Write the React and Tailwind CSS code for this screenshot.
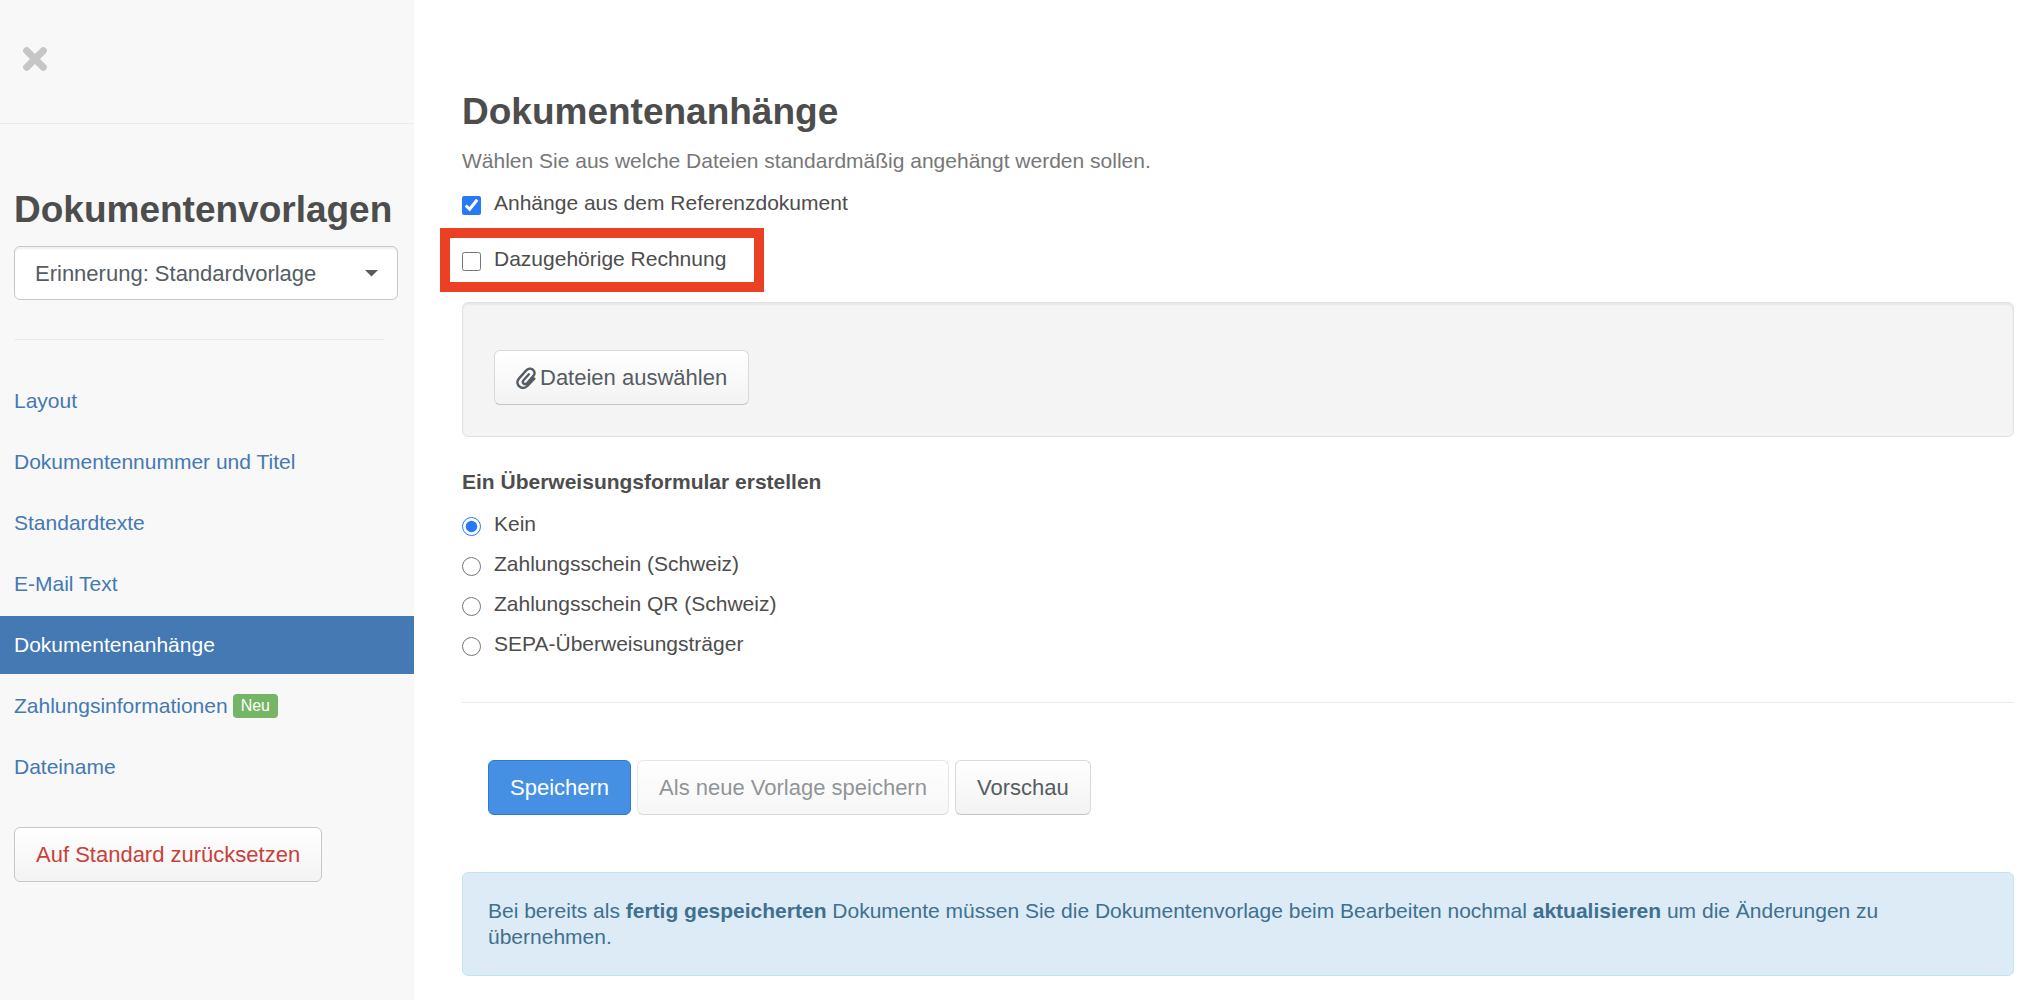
import React, { useState } from "react";

const navItems = [
  { label: "Layout" },
  { label: "Dokumentennummer und Titel" },
  { label: "Standardtexte" },
  { label: "E-Mail Text" },
  { label: "Dokumentenanhänge", active: true },
  { label: "Zahlungsinformationen", badge: "Neu" },
  { label: "Dateiname" },
];

const transferForms = [
  "Kein",
  "Zahlungsschein (Schweiz)",
  "Zahlungsschein QR (Schweiz)",
  "SEPA-Überweisungsträger",
];

const buttonBase =
  "inline-flex items-center justify-center h-[55px] px-[21px] rounded-md border text-[22px] whitespace-nowrap";
const buttonDefault =
  "bg-linear-to-b from-white to-[#f3f3f3] border-[#d9d9d9] border-b-[#c4c4c4] text-[#555c63]";

function PaperclipIcon() {
  return (
    <svg
      className="mr-1"
      width="20"
      height="22"
      viewBox="0 0 20 22"
      fill="none"
      stroke="currentColor"
      strokeWidth="2.4"
      strokeLinecap="round"
      strokeLinejoin="round"
    >
      <path d="M18.3 11.6l-6.7 7.2c-2.4 2.5-5.6 2.7-7.8 1-2.9-2.3-3.2-5.6-.9-8.2L10 3.6c2-2.2 4.9-2.5 6.9-.9 2.1 1.7 2.2 4.3.5 6.2L11.2 16c-1.1 1.2-2.6 1.3-3.6.5-1-.9-1-2.2-.1-3.2l5.4-6" />
    </svg>
  );
}

function Sidebar() {
  return (
    <aside className="w-[414px] shrink-0 bg-[#f8f8f8]">
      <div className="h-[124px] border-b border-[#ececec] pt-[47px] pl-[23px]">
        <button type="button" aria-label="Close" className="block">
          <svg width="24" height="24" viewBox="0 0 24 24" fill="none">
            <path
              d="M3.7 3.7l16.6 16.6M20.3 3.7L3.7 20.3"
              stroke="#c6c6c6"
              strokeWidth="7"
              strokeLinecap="round"
            />
          </svg>
        </button>
      </div>

      <div className="pt-16 px-[14px]">
        <h2 className="text-[37px] leading-[44px] font-bold text-[#4d4d4d]">
          Dokumentenvorlagen
        </h2>
        <div className="relative mt-[14px] w-[384px]">
          <select
            aria-label="Dokumentenvorlage"
            className="block w-full h-[54px] pl-5 appearance-none rounded-md border border-[#c8c8c8] bg-white text-[22px] text-[#555c63] shadow-[inset_0_2px_2px_rgba(0,0,0,0.06)]"
          >
            <option>Erinnerung: Standardvorlage</option>
          </select>
          <svg
            className="absolute right-5 top-6 pointer-events-none"
            width="13"
            height="7"
            viewBox="0 0 13 7"
          >
            <path d="M0 0h13L6.5 6.5z" fill="#555c63" />
          </svg>
        </div>
        <hr className="mt-[39px] mr-4 border-[#ececec]" />
      </div>

      <nav className="mt-8 flex flex-col gap-[3px]">
        {navItems.map((item) => (
          <a
            key={item.label}
            href="#"
            className={`flex items-center h-[58px] px-[14px] text-[21px] ${
              item.active ? "bg-[#4479b3] text-white" : "text-[#4479b3]"
            }`}
          >
            {item.label}
            {item.badge && (
              <span className="ml-[5px] h-6 px-2 rounded-sm bg-[#74b566] text-base leading-6 text-white">
                {item.badge}
              </span>
            )}
          </a>
        ))}
      </nav>

      <div className="mt-[31px] px-[14px]">
        <button
          type="button"
          className={`${buttonBase} bg-linear-to-b from-white to-[#f3f3f3] border-[#c8c8c8] text-[#c9403b]`}
        >
          Auf Standard zurücksetzen
        </button>
      </div>
    </aside>
  );
}

function AttachmentOptions() {
  const [fromReference, setFromReference] = useState(true);
  const [invoice, setInvoice] = useState(false);

  return (
    <>
      <label className="mt-[14px] flex w-fit gap-[13px] text-[21px] leading-7">
        <input
          type="checkbox"
          className="mt-[7px] size-[19px] accent-[#2878f8]"
          checked={fromReference}
          onChange={(e) => setFromReference(e.target.checked)}
        />
        Anhänge aus dem Referenzdokument
      </label>
      <div className="relative mt-7 w-fit">
        <label className="flex gap-[13px] text-[21px] leading-7">
          <input
            type="checkbox"
            className="mt-[7px] size-[19px] accent-[#2878f8]"
            checked={invoice}
            onChange={(e) => setInvoice(e.target.checked)}
          />
          Dazugehörige Rechnung
        </label>
        {/* Highlight frame */}
        <div className="absolute -left-[22px] -top-[17px] w-[324px] h-16 border-[10px] border-[#ec4025] pointer-events-none"></div>
      </div>
    </>
  );
}

function App() {
  const [form, setForm] = useState("Kein");

  return (
    <div
      className="flex min-h-screen bg-white text-[#4d4d4d]"
      style={{ fontFamily: '"Liberation Sans", Arial, sans-serif' }}
    >
      <Sidebar />

      <main className="grow min-w-0 pl-12 pr-[18px] pt-[90px]">
        <h1 className="text-[37px] leading-[44px] font-bold">
          Dokumentenanhänge
        </h1>
        <p className="mt-[13px] text-[21px] leading-7 text-[#777777]">
          Wählen Sie aus welche Dateien standardmäßig angehängt werden sollen.
        </p>

        <AttachmentOptions />

        <div className="mt-[29px] px-[31px] pt-[47px] pb-[31px] rounded-md border border-[#e1e1e1] bg-[#f4f4f4] shadow-[inset_0_2px_2px_rgba(0,0,0,0.05)]">
          <button type="button" className={`${buttonBase} ${buttonDefault}`}>
            <PaperclipIcon />
            Dateien auswählen
          </button>
        </div>

        <fieldset>
          <legend className="pt-[31px] text-[21px] leading-7 font-bold">
            Ein Überweisungsformular erstellen
          </legend>
          <div className="mt-[14px] flex flex-col gap-3">
            {transferForms.map((name) => (
              <label
                key={name}
                className="flex w-fit gap-[13px] text-[21px] leading-7"
              >
                <input
                  type="radio"
                  name="transfer-form"
                  className="mt-[7px] size-[19px] accent-[#2878f8]"
                  checked={form === name}
                  onChange={() => setForm(name)}
                />
                {name}
              </label>
            ))}
          </div>
        </fieldset>

        <hr className="mt-11 border-[#ececec]" />

        <div className="mt-[57px] pl-[26px] flex gap-[6px]">
          <button
            type="submit"
            className={`${buttonBase} bg-[#4690e4] border-[#2f78cf] text-white`}
          >
            Speichern
          </button>
          <button
            type="button"
            disabled
            className={`${buttonBase} ${buttonDefault} opacity-65`}
          >
            Als neue Vorlage speichern
          </button>
          <button type="button" className={`${buttonBase} ${buttonDefault}`}>
            Vorschau
          </button>
        </div>

        <div className="mt-[57px] pl-[25px] pr-[60px] py-[25px] rounded-md border border-[#c5e5ee] bg-[#ddebf6] text-[21px] leading-[26px] text-[#40708f]">
          Bei bereits als <strong>fertig gespeicherten</strong> Dokumente müssen
          Sie die Dokumentenvorlage beim Bearbeiten nochmal{" "}
          <strong>aktualisieren</strong> um die Änderungen zu übernehmen.
        </div>
      </main>
    </div>
  );
}

export default App;
